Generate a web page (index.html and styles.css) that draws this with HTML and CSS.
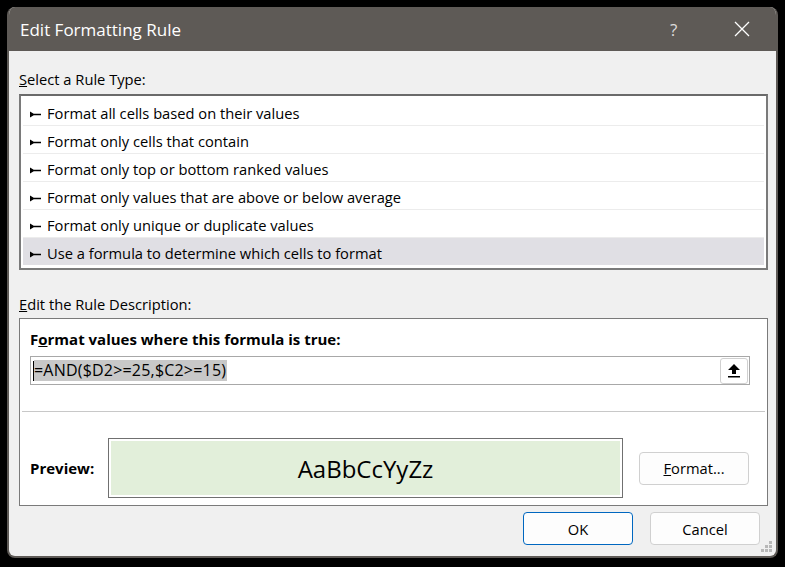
FILE: index.html
```html
<!DOCTYPE html>
<html lang="en">
<head>
    <meta charset="UTF-8">
    <title>Edit Formatting Rule</title>
    <link rel="stylesheet" href="styles.css">
</head>
<body>
    <div class="window">
        <!-- Title bar -->
        <div class="titlebar">
            <span class="title">Edit Formatting Rule</span>
            <span class="help">?</span>
            <span class="close">
                <svg width="16" height="16" viewBox="0 0 16 16"><path d="M1 1 L15 15 M15 1 L1 15" stroke="#fff" stroke-width="1.3" fill="none"/></svg>
            </span>
        </div>

        <div class="content">
            <div class="section-label"><u>S</u>elect a Rule Type:</div>
            <div class="rule-list">
                <div class="rule"><svg class="bullet" width="11" height="7" viewBox="0 0 11 7"><path d="M0 0.5 L5 3.5 L0 6.5 Z M4 2.8 H11 V4.2 H4 Z" fill="#000"/></svg>Format all cells based on their values</div>
                <div class="rule"><svg class="bullet" width="11" height="7" viewBox="0 0 11 7"><path d="M0 0.5 L5 3.5 L0 6.5 Z M4 2.8 H11 V4.2 H4 Z" fill="#000"/></svg>Format only cells that contain</div>
                <div class="rule"><svg class="bullet" width="11" height="7" viewBox="0 0 11 7"><path d="M0 0.5 L5 3.5 L0 6.5 Z M4 2.8 H11 V4.2 H4 Z" fill="#000"/></svg>Format only top or bottom ranked values</div>
                <div class="rule"><svg class="bullet" width="11" height="7" viewBox="0 0 11 7"><path d="M0 0.5 L5 3.5 L0 6.5 Z M4 2.8 H11 V4.2 H4 Z" fill="#000"/></svg>Format only values that are above or below average</div>
                <div class="rule"><svg class="bullet" width="11" height="7" viewBox="0 0 11 7"><path d="M0 0.5 L5 3.5 L0 6.5 Z M4 2.8 H11 V4.2 H4 Z" fill="#000"/></svg>Format only unique or duplicate values</div>
                <div class="rule selected"><svg class="bullet" width="11" height="7" viewBox="0 0 11 7"><path d="M0 0.5 L5 3.5 L0 6.5 Z M4 2.8 H11 V4.2 H4 Z" fill="#000"/></svg>Use a formula to determine which cells to format</div>
            </div>

            <div class="section-label second"><u>E</u>dit the Rule Description:</div>
            <div class="desc-box">
                <div class="formula-label">F<u>o</u>rmat values where this formula is true:</div>
                <div class="formula-input">
                    <span class="caret"></span><span class="formula-text">=AND($D2&gt;=25,$C2&gt;=15)</span>
                    <span class="collapse-btn">
                        <svg width="14" height="16" viewBox="0 0 14 16"><path d="M7 1 L13 7 L9 7 L9 11 L5 11 L5 7 L1 7 Z" fill="#000"/><rect x="1" y="13" width="12" height="1.5" fill="#000"/></svg>
                    </span>
                </div>
                <div class="divider"></div>
                <div class="preview-row">
                    <span class="preview-label">Preview:</span>
                    <div class="preview-box"><div class="preview-inner">AaBbCcYyZz</div></div>
                    <button class="btn format-btn"><u>F</u>ormat...</button>
                </div>
            </div>

            <div class="footer">
                <button class="btn ok">OK</button>
                <button class="btn">Cancel</button>
            </div>
        </div>
        <svg class="grip" width="12" height="12" viewBox="0 0 12 12">
            <rect x="8" y="0" width="3" height="3" fill="#b8b8b8"/>
            <rect x="4" y="4" width="3" height="3" fill="#b8b8b8"/>
            <rect x="8" y="4" width="3" height="3" fill="#b8b8b8"/>
            <rect x="0" y="8" width="3" height="3" fill="#b8b8b8"/>
            <rect x="4" y="8" width="3" height="3" fill="#b8b8b8"/>
            <rect x="8" y="8" width="3" height="3" fill="#b8b8b8"/>
        </svg>
    </div>
</body>
</html>
```
FILE: styles.css
```css
body {
    margin: 0;
    background: #000;
    font-family: "Open Sans", "Noto Sans", sans-serif;
    font-size: 14.7px;
    color: #000;
}
.window {
    position: relative;
    margin: 7px 0 0 7px;
    width: 767px;
    height: 549px;
    background: #f0f0f0;
    border: 2px solid #5e5a56;
    border-top: none;
    border-radius: 8px;
    overflow: hidden;
}
.titlebar {
    height: 44px;
    background: #5e5a56;
    color: #fff;
    display: flex;
    align-items: center;
    padding-left: 11px;
}
.title {
    font-size: 17px;
    flex: 1;
}
.help {
    font-size: 17px;
    color: #ddd;
    width: 64px;
}
.close {
    width: 42px;
    display: flex;
    align-items: center;
}
.content {
    padding: 18px 8px 0 10px;
}
.section-label {
    height: 20px;
    line-height: 20px;
    margin-bottom: 5px;
}
.section-label.second {
    margin-top: 24px;
    margin-bottom: 4px;
}
.rule-list {
    height: 170px;
    border: 2px solid #7a7a7a;
    border-top-color: #6a6a6a;
    background: #fff;
    padding: 2px 1px 0 1px;
}
.rule {
    height: 25px;
    padding-top: 2px;
    line-height: 27px;
    border-bottom: 1px solid #ececec;
    padding-left: 7px;
    margin: 0 1px;
}
.rule.selected {
    background: #e0dfe4;
    border-bottom: none;
}
.bullet {
    margin-right: 6px;
    vertical-align: 1px;
}
.desc-box {
    height: 186px;
    border: 1px solid #7a7a7a;
    background: #fff;
    padding: 0 1px;
}
.formula-label {
    font-weight: bold;
    font-size: 15px;
    margin: 10px 0 0 9px;
    height: 20px;
    line-height: 20px;
}
.formula-input {
    margin: 7px 16px 0 9px;
    height: 27px;
    border: 1px solid #a8a8a8;
    display: flex;
    align-items: center;
    padding-left: 2px;
}
.caret {
    width: 1px;
    height: 20px;
    background: #000;
}
.formula-text {
    background: #c8c8c8;
    padding-right: 1px;
    line-height: 21px;
    font-size: 16px;
    letter-spacing: 0.2px;
}
.collapse-btn {
    margin-left: auto;
    margin-right: 1px;
    width: 26px;
    height: 24px;
    border: 1px solid #d0d0d0;
    border-radius: 3px;
    display: flex;
    align-items: center;
    justify-content: center;
}
.divider {
    height: 1px;
    background: #c8c8c8;
    margin: 26px 1px 0 1px;
}
.preview-row {
    display: flex;
    align-items: center;
    margin-top: 26px;
    padding-left: 9px;
}
.preview-label {
    font-weight: bold;
    font-size: 15px;
    width: 78px;
}
.preview-box {
    width: 515px;
    height: 60px;
    border: 1px solid #707070;
    padding: 2px;
    box-sizing: border-box;
    background: #fff;
}
.preview-inner {
    height: 100%;
    background: #e2efda;
    display: flex;
    align-items: center;
    justify-content: center;
    font-size: 24px;
    color: #000;
}
.btn {
    width: 110px;
    height: 33px;
    background: #fdfdfd;
    border: 1px solid #d0d0d0;
    border-radius: 4px;
    font-family: inherit;
    font-size: 14.7px;
    color: #000;
    padding: 0;
}
.format-btn {
    margin-left: 16px;
}
.footer {
    display: flex;
    justify-content: flex-end;
    gap: 17px;
    margin-top: 6px;
    padding-right: 8px;
}
.btn.ok {
    border-color: #0067c0;
}
.grip {
    position: absolute;
    right: 3px;
    bottom: 3px;
}
```
